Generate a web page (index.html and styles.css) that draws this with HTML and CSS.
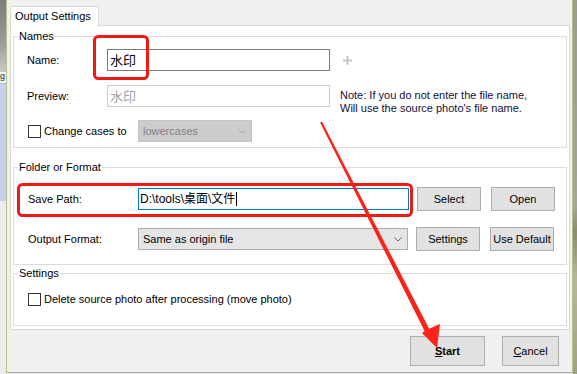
FILE: index.html
```html
<!DOCTYPE html>
<html>
<head>
<meta charset="utf-8">
<link rel="stylesheet" href="styles.css">
</head>
<body>
<div class="screen">
  <div class="bg-left"><div class="bg-top"></div><div class="bg-g">g</div><div class="bg-blue"></div><div class="bg-rest"></div></div>
  <div class="window">
    <div class="tabs"><div class="tab">Output Settings</div></div>
    <div class="panel">
      <fieldset class="group names">
        <legend>Names</legend>
        <div class="row r-name">
          <span class="lbl w80">Name:</span>
          <div class="input cjk">水印</div>
          <svg class="plus" width="9" height="9" viewBox="0 0 9 9"><path d="M3.5 0h2v3.5h3.5v2h-3.5v3.5h-2v-3.5h-3.5v-2h3.5z" fill="#c4c4c4"/></svg>
        </div>
        <div class="row r-preview">
          <span class="lbl w80">Preview:</span>
          <div class="input cjk disabled">水印</div>
          <div class="note">Note: If you do not enter the file name,<br>Will use the source photo's file name.</div>
        </div>
        <div class="row r-case">
          <div class="chkwrap w111"><span class="check"></span><span class="chk-label">Change cases to</span></div>
          <div class="combo disabled w114"><span>lowercases</span><svg width="8" height="5" viewBox="0 0 8 5"><path d="M0.5 0.5L4 4L7.5 0.5" fill="none" stroke="#a8a8a8"/></svg></div>
        </div>
      </fieldset>
      <fieldset class="group folder">
        <legend>Folder or Format</legend>
        <div class="row r-save">
          <span class="lbl w110 pl1">Save Path:</span>
          <div class="input focused w271"><span class="cjk-mix">D:\tools\桌面\文件</span><span class="caret"></span></div>
          <button class="btn b-select">Select</button>
          <button class="btn b-open">Open</button>
        </div>
        <div class="row r-format">
          <span class="lbl w110 pl1">Output Format:</span>
          <div class="combo w270"><span>Same as origin file</span><svg width="8" height="5" viewBox="0 0 8 5"><path d="M0.5 0.5L4 4L7.5 0.5" fill="none" stroke="#606060"/></svg></div>
          <button class="btn b-select">Settings</button>
          <button class="btn b-open">Use Default</button>
        </div>
      </fieldset>
      <fieldset class="group settings">
        <legend>Settings</legend>
        <div class="row r-del">
          <div class="chkwrap"><span class="check"></span><span class="chk-label">Delete source photo after processing (move photo)</span></div>
        </div>
      </fieldset>
    </div>
    <div class="footer">
      <button class="btn start"><u>S</u>tart</button>
      <button class="btn cancel"><u>C</u>ancel</button>
    </div>
  </div>
  <div class="bg-right"></div>
  <svg class="annot" width="577" height="374" viewBox="0 0 577 374">
    <rect x="94.5" y="36.5" width="53" height="42" rx="4" fill="none" stroke="#f01a14" stroke-width="3"/>
    <rect x="18.5" y="184.5" width="393" height="31" rx="4" fill="none" stroke="#f01a14" stroke-width="3"/>
    <polygon points="321.9,121.5 429.2,328.8 440,324 437,348 422,333 424.6,331.1 320.1,122.5" fill="#fb2318"/>
  </svg>
</div>
</body>
</html>
```

FILE: styles.css
```css
* { box-sizing: border-box; }
html, body { margin: 0; padding: 0; }
body {
  width: 577px;
  height: 374px;
  overflow: hidden;
  background: #e8e8e8;
  font-family: "Liberation Sans", Arial, sans-serif;
  font-size: 11px;
  color: #000;
}
.screen {
  position: relative;
  display: flex;
  width: 577px;
  height: 374px;
}
.bg-left {
  width: 6px;
  display: flex;
  flex-direction: column;
  overflow: hidden;
}
.bg-top { height: 72px; background: linear-gradient(#7c7c7c, #9c9c9c 60%, #c8c8c8); }
.bg-g { height: 11px; background: #f6f6f6; font-size: 9px; line-height: 9px; color: #222; }
.bg-blue { height: 118px; background: #c9d1ea; border-top: 1px solid #a9b8de; }
.bg-rest { flex: 1; background: #ececec; }
.bg-right {
  width: 4px;
  background: linear-gradient(#9a9a9a, #a4a4a4 55%, #8c8a70 62%, #b9b4a0 75%, #9fa08a);
}
.window {
  width: 567px;
  height: 373px;
  background: #f0f0f0;
  border-left: 1px solid #b3c57e;
  border-right: 1px solid #b3c57e;
  border-bottom: 1px solid #a8a8a8;
  padding: 6px 2px 0 3px;
  display: flex;
  flex-direction: column;
}
.tabs {
  height: 20px;
  margin-bottom: -1px;
  display: flex;
  position: relative;
  z-index: 1;
}
.tab {
  width: 89px;
  height: 21px;
  background: #fff;
  border: 1px solid #d9d9d9;
  border-bottom: none;
  padding-left: 4px;
  line-height: 19px;
  font-size: 11px;
}
.panel {
  height: 305px;
  background: #fff;
  border: 1px solid #d9d9d9;
  padding: 2px 2px 3px 2px;
}
.group {
  margin: 0;
  padding: 0 0 0 13px;
  border: 1px solid #dcdcdc;
  min-width: 0;
}
.group legend {
  margin-left: -9px;
  padding: 0 1px;
  line-height: 16px;
  height: 16px;
  font-size: 11px;
}
.names { padding-bottom: 5px; }
.folder { margin-top: 11px; padding-bottom: 13px; }
.settings { padding-bottom: 18px; }
.row { display: flex; align-items: center; }
.r-name { height: 22px; margin-top: 5px; }
.r-preview { height: 22px; margin-top: 14px; }
.r-case { height: 22px; margin-top: 13px; }
.r-save { height: 24px; margin-top: 12px; }
.r-format { height: 24px; margin-top: 16px; }
.r-del { height: 16px; margin-top: 10px; }
.lbl { line-height: 16px; }
.w80 { width: 80px; flex: none; }
.w110 { width: 111px; flex: none; }
.w111 { width: 111px; flex: none; }
.pl1 { padding-left: 1px; }
.input {
  width: 223px;
  height: 22px;
  border: 1px solid #7a7a7a;
  background: #fff;
  padding-left: 2px;
  display: flex;
  align-items: center;
  flex: none;
}
.cjk {
  font-family: "Noto Sans CJK SC", sans-serif;
  font-size: 13px;
  line-height: 16px;
  color: #000;
}
.input.disabled { border-color: #cccccc; color: #a0a0a0; }
.input.focused { border-color: #0078d7; padding-left: 1px; }
.w271 { width: 271px; }
.cjk-mix {
  font-family: "Liberation Sans", "Noto Sans CJK SC", sans-serif;
  font-size: 12px;
  line-height: 16px;
}
.caret { width: 1px; height: 14px; background: #000; margin-left: 1px; }
.plus { margin-left: 13px; }
.note {
  align-self: flex-start;
  margin-top: 4px;
  margin-left: 10px;
  line-height: 13px;
  color: #101038;
  white-space: nowrap;
}
.chkwrap { display: flex; align-items: center; }
.check {
  width: 13px;
  height: 13px;
  border: 1px solid #333;
  background: #fff;
  margin-left: 1px;
  flex: none;
}
.chk-label { margin-left: 3px; line-height: 16px; }
.combo {
  height: 22px;
  border: 1px solid #adadad;
  background: #e5e5e5;
  display: flex;
  align-items: center;
  justify-content: space-between;
  padding: 0 5px 0 4px;
  flex: none;
}
.combo.disabled { background: #cccccc; border-color: #c4c4c4; color: #838383; }
.w114 { width: 114px; }
.w270 { width: 270px; }
.btn {
  font-family: "Liberation Sans", Arial, sans-serif;
  font-size: 11px;
  color: #000;
  height: 24px;
  width: 64px;
  background: #e1e1e1;
  border: 1px solid #adadad;
  padding: 0;
  flex: none;
}
.b-select { margin-left: 8px; }
.b-open { margin-left: 10px; }
.footer {
  flex: 1;
  display: flex;
  justify-content: flex-end;
  padding: 6px 11px 0 0;
}
.start { width: 75px; height: 30px; font-weight: bold; }
.cancel { width: 57px; height: 30px; margin-left: 17px; }
.annot {
  position: absolute;
  left: 0;
  top: 0;
  pointer-events: none;
}
```
